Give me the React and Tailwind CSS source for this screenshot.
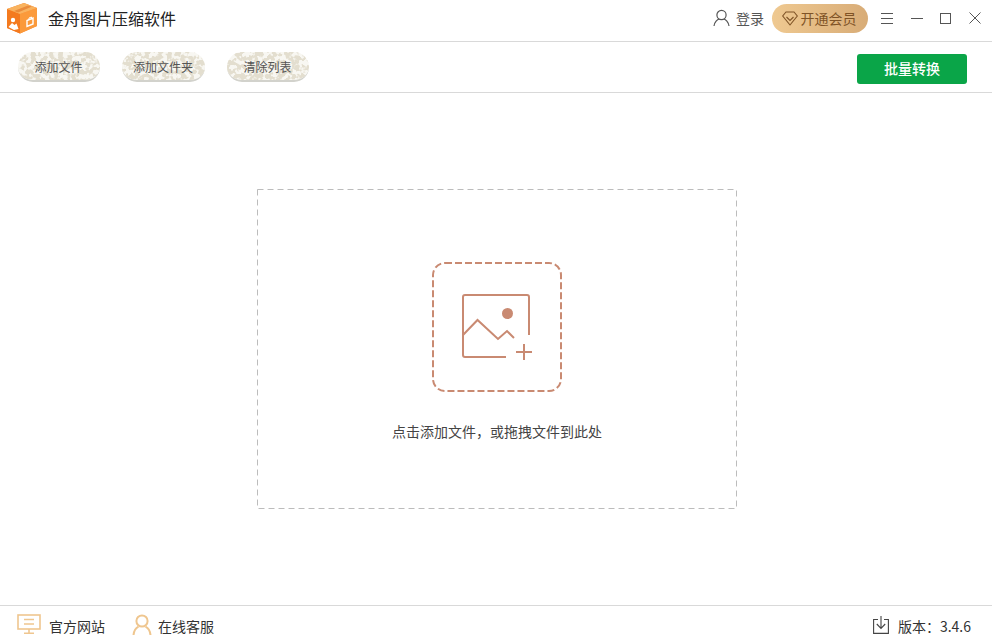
const FONT = "font-['Microsoft_YaHei','Noto_Sans_CJK_SC','Noto_Sans',sans-serif]";
const ICON_COLOR = "#c98a72";
const FOOTER_ICON = "#efc68f";

function Logo() {
   return (
      <svg width="32" height="32" viewBox="0 0 32 32" aria-hidden="true">
         <path d="M1 7 L18 1 L31 6 L31 24 L14 31.5 L1 26 Z" fill="#f97f25" />
         <path d="M14 12 L31 6 L31 24 L14 31.5 Z" fill="#fb9a3b" />
         <path d="M1 7 L14 12 L14 31.5 L1 26 Z" fill="#f47a1f" />
         <path d="M1 7 L18 1 L31 6 L14 12 Z" fill="#f9b35f" />
         <path d="M8 9 L22 3.5 L26 4.5 L12 10.5 Z" fill="#e98b3c" />
         <circle cx="7" cy="18" r="2.2" fill="#fff" />
         <path d="M2.5 25 L6 21 L8.5 23 L10.5 21.5 L12.5 27 L8 28 Z" fill="#fff" />
         <path d="M27 16 L27 22 L21 24.5 L21 18.5 Z" fill="none" stroke="#fff" strokeWidth="1.4" />
         <path d="M23 18 L23 16 L25.5 15 L25.5 17.4" fill="none" stroke="#fff" strokeWidth="1" />
      </svg>
   );
}

function UserIcon() {
   return (
      <svg width="17" height="18" viewBox="0 0 17 18" fill="none" stroke="#555" strokeWidth="1.2" aria-hidden="true">
         <circle cx="8.5" cy="6" r="4.6" />
         <path d="M1 17 C1.5 12.8 4.4 10.4 6.2 10 M16 17 C15.5 12.8 12.6 10.4 10.8 10" />
      </svg>
   );
}

function DiamondIcon() {
   return (
      <svg width="16" height="15" viewBox="0 0 16 15" fill="none" stroke="#7f5326" strokeWidth="1.1" aria-hidden="true">
         <path d="M4 1 H12 L15.3 5 L8 14 L0.7 5 Z" />
         <path d="M4.5 6 L8 9.5 L11.5 6" />
      </svg>
   );
}

function WindowControls() {
   return (
      <div className="flex items-center">
         <svg className="ml-[13px]" width="12" height="12" viewBox="0 0 12 12" stroke="#555" strokeWidth="1" aria-hidden="true">
            <path d="M0 1.5 H12 M0 6.5 H12 M0 11.5 H12" />
         </svg>
         <svg className="ml-[18px]" width="12" height="12" viewBox="0 0 12 12" stroke="#555" strokeWidth="1" aria-hidden="true">
            <path d="M0 6.5 H12" />
         </svg>
         <svg className="ml-[17px]" width="11" height="11" viewBox="0 0 11 11" fill="none" stroke="#555" strokeWidth="1" aria-hidden="true">
            <rect x="0.5" y="0.5" width="10" height="10" />
         </svg>
         <svg className="ml-[18px]" width="12" height="12" viewBox="0 0 12 12" stroke="#555" strokeWidth="1" aria-hidden="true">
            <path d="M0.5 0.5 L11.5 11.5 M11.5 0.5 L0.5 11.5" />
         </svg>
      </div>
   );
}

// mottled cream pill, each one gets its own noise seed
function ToolButton({ children, width, seed }) {
   const filterId = `pill-noise-${seed}`;
   return (
      <button type="button" className="relative flex h-[30px] items-center justify-center overflow-hidden rounded-full border-b-2 border-[#d2d2cc] bg-[#f8f7f2] pt-[2px] pr-[1px] text-[12px] text-[#555]" style={{ width }}>
         <svg className="absolute inset-0 size-full" aria-hidden="true">
            <filter id={filterId} x="0" y="0" width="100%" height="100%" colorInterpolationFilters="sRGB">
               <feTurbulence type="fractalNoise" baseFrequency="0.22" numOctaves="2" seed={seed} />
               <feColorMatrix values="0 0 0 0 0.89  0 0 0 0 0.87  0 0 0 0 0.81  9 0 0 0 -3.9" />
            </filter>
            <rect width="100%" height="100%" filter={`url(#${filterId})`} />
         </svg>
         <span className="relative">{children}</span>
      </button>
   );
}

function DropIcon() {
   return (
      <svg width="72" height="68" viewBox="0 0 72 68" fill="none" stroke={ICON_COLOR} strokeWidth="2" aria-hidden="true">
         <path d="M67 42 V4 Q67 2 65 2 H3 Q1 2 1 4 V62 Q1 64 3 64 H44" />
         <path d="M1 42 L15.5 27 L36 46 L45 38 L52 45" />
         <circle cx="45.5" cy="20.5" r="5.5" fill={ICON_COLOR} stroke="none" />
         <path d="M54 59 H70 M62 51 V67" />
      </svg>
   );
}

function DropZone() {
   return (
      <div className="relative flex h-[320px] w-[480px] flex-col items-center">
         <svg className="absolute inset-0" width="480" height="320" fill="none" aria-hidden="true">
            <rect x="0.5" y="0.5" width="479" height="319" stroke="#bcbcbc" strokeDasharray="6 4" />
         </svg>
         <div className="relative mt-[73px] flex size-[130px] items-center justify-center">
            <svg className="absolute inset-0" width="130" height="130" fill="none" aria-hidden="true">
               <rect x="1" y="1" width="128" height="128" rx="12" stroke={ICON_COLOR} strokeWidth="2" strokeDasharray="7 3" />
            </svg>
            <div className="relative ml-[2px]">
               <DropIcon />
            </div>
         </div>
         <p className="mt-[29px] text-[14px] leading-5 text-[#444]">{"点击添加文件\uFF0C或拖拽文件到此处"}</p>
      </div>
   );
}

function MonitorIcon() {
   return (
      <svg width="24" height="20" viewBox="0 0 24 20" fill="none" stroke={FOOTER_ICON} strokeWidth="1.6" aria-hidden="true">
         <rect x="1" y="1" width="22" height="14" />
         <path d="M7 5.5 H17 M7 10 H17 M12 15 V19 M7 19.2 H17" />
      </svg>
   );
}

function AgentIcon() {
   return (
      <svg width="20" height="21" viewBox="0 0 20 21" fill="none" stroke={FOOTER_ICON} strokeWidth="2" aria-hidden="true">
         <circle cx="10" cy="7" r="5.6" />
         <path d="M1.5 21 C2 16 4.4 13.6 6.5 12.6 M18.5 21 C18 16 15.6 13.6 13.5 12.6" />
      </svg>
   );
}

function UpdateIcon() {
   return (
      <svg width="16" height="18" viewBox="0 0 16 18" fill="none" stroke="#444" strokeWidth="1.1" aria-hidden="true">
         <path d="M5 3.5 H0.6 V17.4 H15.4 V3.5 H11" />
         <path d="M8 0 V12 M3.8 8 L8 12.4 L12.2 8" />
      </svg>
   );
}

export default function App() {
   return (
      <div className={`flex h-[642px] w-[992px] flex-col overflow-hidden bg-white ${FONT}`}>
         <header className="flex h-[42px] shrink-0 items-center border-b border-[#d9d9d9] pr-[11px] pb-[5px] pl-[6px]">
            <Logo />
            <h1 className="ml-[10px] text-[16px] font-normal text-[#222]">金舟图片压缩软件</h1>
            <div className="ml-auto flex items-center">
               <UserIcon />
               <span className="mr-[8px] ml-[6px] text-[14px] text-[#555]">登录</span>
               <button type="button" className="flex h-[29px] w-[96px] items-center justify-center gap-[3px] rounded-full bg-gradient-to-r from-[#efc991] to-[#d8ac77] pr-[2px] text-[14px] text-[#7f5326]">
                  <DiamondIcon />
                  开通会员
               </button>
               <WindowControls />
            </div>
         </header>

         <div className="flex h-[51px] shrink-0 items-center border-b border-[#d9d9d9] pr-[25px] pl-[18px]">
            <div className="flex gap-[22px]">
               <ToolButton width={82} seed={4}>添加文件</ToolButton>
               <ToolButton width={83} seed={9}>添加文件夹</ToolButton>
               <ToolButton width={82} seed={15}>清除列表</ToolButton>
            </div>
            <button type="button" className="mt-[4px] ml-auto h-[30px] w-[110px] rounded-[3px] bg-[#0aa548] pb-[1px] text-[14px] font-medium text-white">批量转换</button>
         </div>

         <main className="flex flex-1 items-center justify-center pl-[2px]">
            <DropZone />
         </main>

         <footer className="flex h-[37px] shrink-0 items-center border-t border-[#d9d9d9] pt-[4px] pr-[21px] pl-[17px] text-[14px] text-[#333]">
            <span className="mb-[4px]"><MonitorIcon /></span>
            <span className="ml-[8px]">官方网站</span>
            <span className="mb-[3px] ml-[27px]"><AgentIcon /></span>
            <span className="ml-[6px]">在线客服</span>
            <div className="ml-auto flex items-center">
               <span className="mb-[2px]"><UpdateIcon /></span>
               <span className="ml-[9px]">{"版本\uFF1A3.4.6"}</span>
            </div>
         </footer>
      </div>
   );
}
